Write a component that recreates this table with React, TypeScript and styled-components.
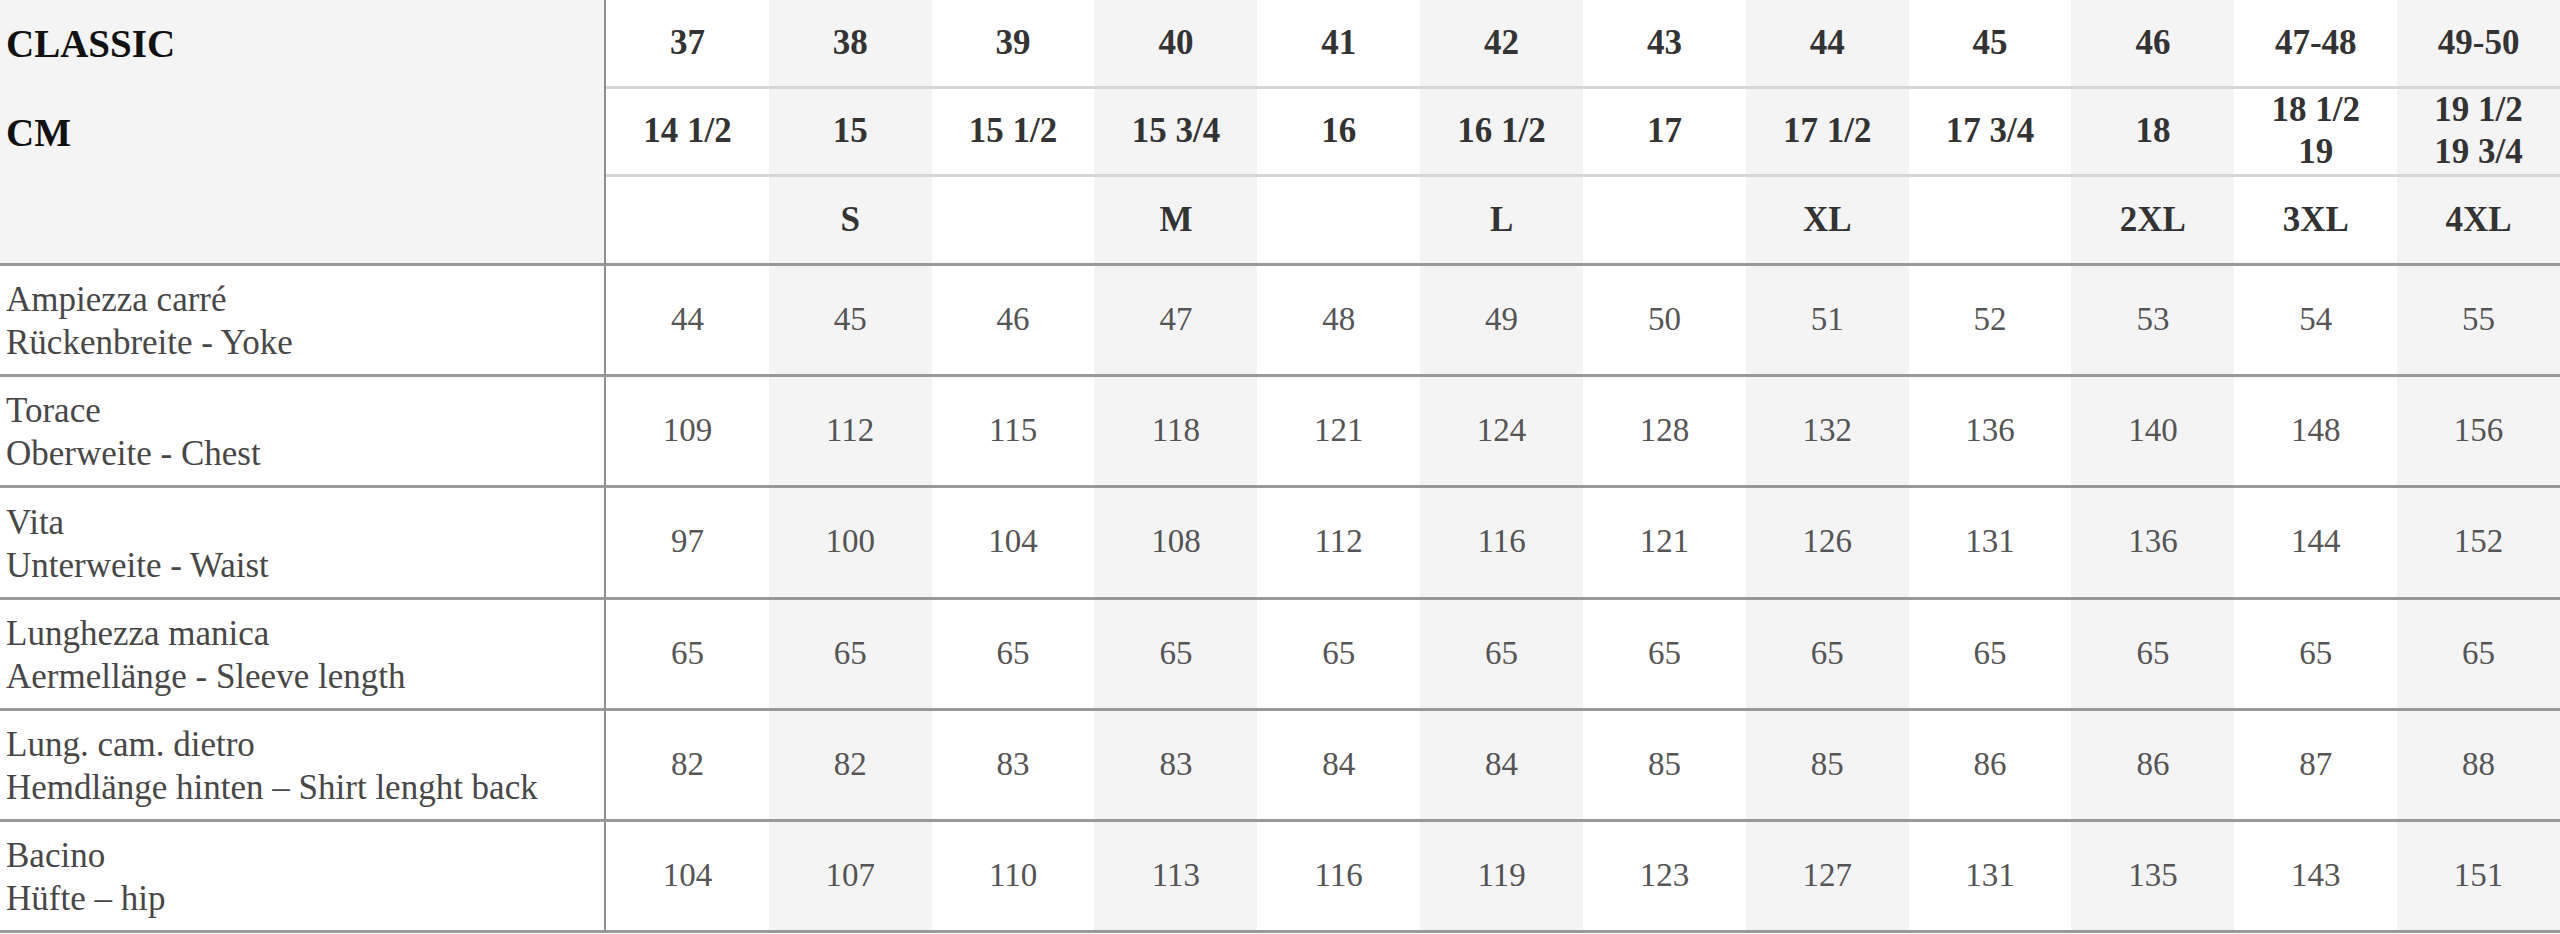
import React from 'react';
import styled, { createGlobalStyle } from 'styled-components';

const GlobalStyle = createGlobalStyle`
  * { box-sizing: border-box; }
  body {
    margin: 0;
    background: #fff;
    font-family: "Liberation Serif", "Times New Roman", serif;
  }
`;

const Sheet = styled.div`
  display: grid;
  grid-template-columns: 606px repeat(12, 1fr);
  grid-template-rows: 89px 88px 89px 111px 111px 112px 111px 111px 111px;
  width: 2560px;
`;

const LabelHead = styled.div`
  grid-row: span 3;
  display: grid;
  grid-template-rows: 89px 88px 1fr;
  background: #f4f4f4;
  border-right: 2px solid #8f8f8f;
  border-bottom: 3px solid #999;
`;

const HeadTitle = styled.div`
  display: flex;
  align-items: center;
  padding: 0 0 2px 6px;
  font-size: 39px;
  font-weight: 700;
  color: #111;
`;

const SizeHead = styled.div<{ $shade: boolean; $last: boolean }>`
  display: flex;
  flex-direction: column;
  align-items: center;
  justify-content: center;
  text-align: center;
  padding-bottom: 1px;
  background: ${(p) => (p.$shade ? '#f4f4f4' : '#fff')};
  border-bottom: ${(p) => (p.$last ? '3px solid #999' : '3px solid #d6d6d6')};
  font-size: 35px;
  line-height: 42px;
  font-weight: 700;
  color: #333;
`;

const RowLabel = styled.div`
  display: flex;
  flex-direction: column;
  justify-content: center;
  padding: 2px 0 0 6px;
  border-right: 2px solid #8f8f8f;
  border-bottom: 3px solid #999;
  font-size: 35px;
  line-height: 43px;
  color: #474747;
  white-space: nowrap;
`;

const Value = styled.div<{ $shade: boolean }>`
  display: flex;
  align-items: center;
  justify-content: center;
  padding-bottom: 2px;
  background: ${(p) => (p.$shade ? '#f4f4f4' : '#fff')};
  border-bottom: 3px solid #999;
  font-size: 33px;
  color: #555;
`;

const sizes = ['37', '38', '39', '40', '41', '42', '43', '44', '45', '46', '47-48', '49-50'];
const collars = [
  ['14 1/2'], ['15'], ['15 1/2'], ['15 3/4'], ['16'], ['16 1/2'],
  ['17'], ['17 1/2'], ['17 3/4'], ['18'], ['18 1/2', '19'], ['19 1/2', '19 3/4'],
];
const letters = ['', 'S', '', 'M', '', 'L', '', 'XL', '', '2XL', '3XL', '4XL'];

const rows = [
  { it: 'Ampiezza carré', de: 'Rückenbreite - Yoke', values: [44, 45, 46, 47, 48, 49, 50, 51, 52, 53, 54, 55] },
  { it: 'Torace', de: 'Oberweite - Chest', values: [109, 112, 115, 118, 121, 124, 128, 132, 136, 140, 148, 156] },
  { it: 'Vita', de: 'Unterweite - Waist', values: [97, 100, 104, 108, 112, 116, 121, 126, 131, 136, 144, 152] },
  { it: 'Lunghezza manica', de: 'Aermellänge - Sleeve length', values: [65, 65, 65, 65, 65, 65, 65, 65, 65, 65, 65, 65] },
  { it: 'Lung. cam. dietro', de: 'Hemdlänge hinten – Shirt lenght back', values: [82, 82, 83, 83, 84, 84, 85, 85, 86, 86, 87, 88] },
  { it: 'Bacino', de: 'Hüfte – hip', values: [104, 107, 110, 113, 116, 119, 123, 127, 131, 135, 143, 151] },
];

const App: React.FC = () => {
  return (
    <>
      <GlobalStyle />
      <Sheet>
        <LabelHead>
          <HeadTitle>CLASSIC</HeadTitle>
          <HeadTitle>CM</HeadTitle>
        </LabelHead>
        {sizes.map((s, i) => (
          <SizeHead key={'s' + s} $shade={i % 2 === 1} $last={false}>{s}</SizeHead>
        ))}
        {collars.map((c, i) => (
          <SizeHead key={'c' + i} $shade={i % 2 === 1} $last={false}>
            {c.map((line) => <span key={line}>{line}</span>)}
          </SizeHead>
        ))}
        {letters.map((l, i) => (
          <SizeHead key={'l' + i} $shade={i % 2 === 1} $last>{l}</SizeHead>
        ))}
        {rows.map((r) => (
          <React.Fragment key={r.it}>
            <RowLabel>
              <span>{r.it}</span>
              <span>{r.de}</span>
            </RowLabel>
            {r.values.map((v, i) => (
              <Value key={i} $shade={i % 2 === 1}>{v}</Value>
            ))}
          </React.Fragment>
        ))}
      </Sheet>
    </>
  );
};

export default App;
